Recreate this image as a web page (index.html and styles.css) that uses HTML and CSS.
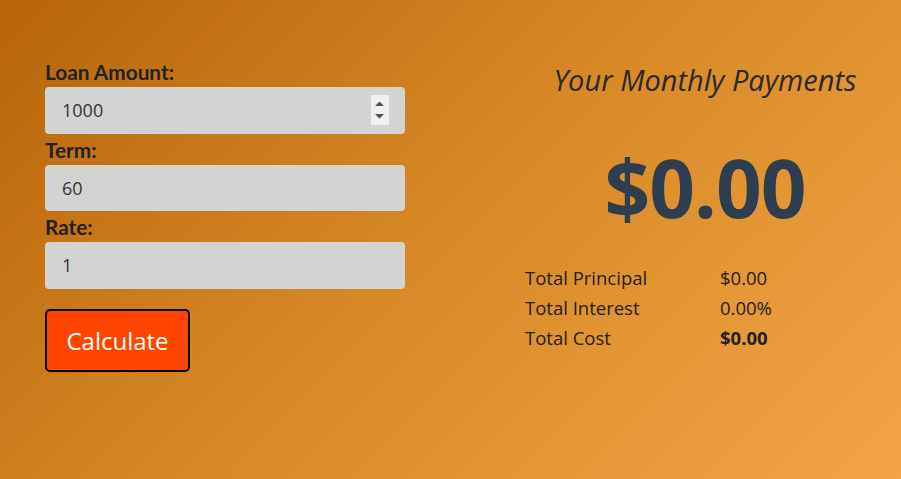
FILE: index.html
```html
<!DOCTYPE html>
<html>
<head>
<meta charset="utf-8">
<link rel="stylesheet" href="styles.css">
</head>
<body>
<div class="page">
  <form class="form">
    <label class="label">Loan Amount:</label>
    <div class="field">
      <span class="value">1000</span>
      <span class="spin">
        <svg width="17" height="30" viewBox="0 0 17 30"><path d="M4 11 L8.5 6.5 L13 11 Z M4 19 L13 19 L8.5 23.5 Z" fill="#505050"/></svg>
      </span>
    </div>
    <label class="label">Term:</label>
    <div class="field"><span class="value">60</span></div>
    <label class="label">Rate:</label>
    <div class="field"><span class="value">1</span></div>
    <button type="button" class="btn">Calculate</button>
  </form>
  <section class="result">
    <h2 class="title">Your Monthly Payments</h2>
    <div class="amount">$0.00</div>
    <table class="summary">
      <tr><td class="k">Total Principal</td><td class="v">$0.00</td></tr>
      <tr><td class="k">Total Interest</td><td class="v">0.00%</td></tr>
      <tr><td class="k">Total Cost</td><td class="v strong">$0.00</td></tr>
    </table>
  </section>
</div>
</body>
</html>
```
FILE: styles.css
```css
html, body { margin: 0; height: 100%; }
body {
  background: linear-gradient(135deg, #b7640a 0%, #d98a27 50%, #f3a446 100%);
  font-family: "Open Sans", "Noto Sans", sans-serif;
  color: #222;
}
.page {
  display: grid;
  grid-template-columns: 360px 390px;
  column-gap: 105px;
  padding: 61px 0 0 45px;
}
.form { display: flex; flex-direction: column; }
.label {
  font-family: Lato, sans-serif;
  font-weight: 700;
  font-size: 20.8px;
  line-height: 22px;
  color: #222;
  height: 22px;
  margin-bottom: 4px;
}
.field {
  height: 46.5px;
  background: #d3d3d3;
  border-radius: 4px;
  display: flex;
  align-items: center;
  padding: 0 17px;
  margin-bottom: 5px;
  box-sizing: border-box;
  flex: none;
}
.value {
  flex: 1;
  font-size: 18px;
  color: #333;
}
.spin {
  background: #f0f0f0;
  width: 18px;
  height: 30px;
  display: flex;
  margin-right: -1px;
}
.btn {
  align-self: flex-start;
  margin-top: 15px;
  width: 145px;
  height: 63px;
  background: #ff4500;
  border: 2px solid #000;
  border-radius: 5px;
  color: #fff;
  font-family: "Open Sans", sans-serif;
  font-size: 24px;
  padding: 0;
}
.result { display: flex; flex-direction: column; align-items: center; }
.title {
  margin: 0;
  font-weight: 400;
  font-style: italic;
  font-size: 29px;
  line-height: 38px;
  color: #2a2a2a;
}
.amount {
  margin-top: 38px;
  font-weight: 700;
  font-size: 80px;
  line-height: 100px;
  color: #2c3e50;
  letter-spacing: -1px;
}
.summary {
  align-self: flex-start;
  margin-left: 15px;
  margin-top: 25px;
  border-collapse: collapse;
  font-size: 18.5px;
  color: #222;
}
.summary td { padding: 0; height: 30px; }
.k { width: 195px; }
.strong { font-weight: 700; }
```
